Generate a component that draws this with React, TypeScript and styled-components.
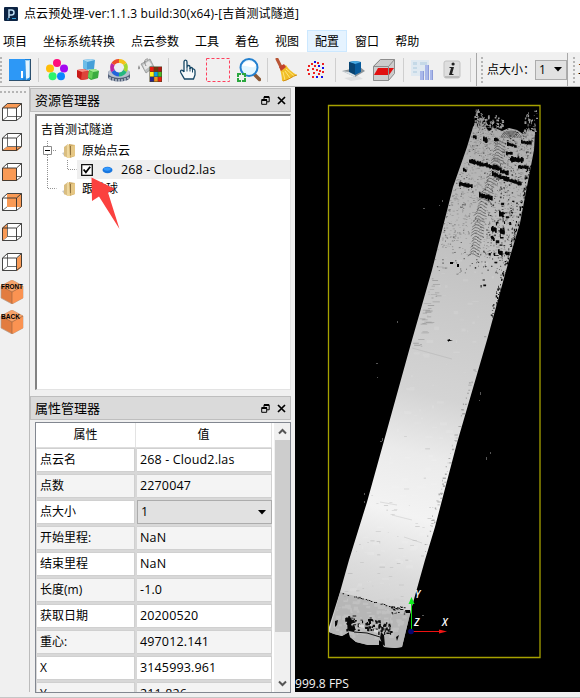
import React from 'react';
import styled, { createGlobalStyle } from 'styled-components';

const GlobalStyle = createGlobalStyle`
  * { box-sizing: border-box; }
  body { margin: 0; background: #f0f0f0; overflow: hidden; }
  svg { display: block; flex: none; }
`;

const Window = styled.div`
  width: 580px;
  height: 698px;
  display: flex;
  flex-direction: column;
  overflow: hidden;
  background: #f0f0f0;
  color: #000;
  font: 12px/16px 'Open Sans', 'Noto Sans CJK SC', sans-serif;
  white-space: nowrap;
`;

const TitleBar = styled.header`
  height: 28px;
  flex: none;
  display: flex;
  align-items: center;
  gap: 6px;
  padding: 0 0 0 4px;
  background: #fff;
`;

const TitleText = styled.span`
  letter-spacing: 0.12px;
`;

const MenuBar = styled.nav`
  height: 25px;
  flex: none;
  display: flex;
  padding: 2px 0 0;
  margin-left: -5px;
  background: #fff;
  border-bottom: 1px solid #f2f2f2;
`;

const MenuItem = styled.span<{ $active?: boolean }>`
  height: 22px;
  padding: ${p => (p.$active ? '3px 7px' : '4px 8px')};
  border: ${p => (p.$active ? '1px solid #cce8ff' : 'none')};
  background: ${p => (p.$active ? '#e5f3ff' : 'transparent')};
`;

const Toolbar = styled.div`
  height: 34px;
  flex: none;
  display: flex;
  align-items: center;
  border-bottom: 1px solid #b4b4b4;
  overflow: hidden;
`;

const Grip = styled.span<{ $horizontal?: boolean; $length: number }>`
  flex: none;
  width: ${p => (p.$horizontal ? p.$length : 3)}px;
  height: ${p => (p.$horizontal ? 3 : p.$length)}px;
  background-image: radial-gradient(circle at 1px 1px, #b5b5b5 1px, transparent 1.3px);
  background-size: ${p => (p.$horizontal ? '4px 3px' : '3px 4px')};
`;

const ToolGroup = styled.div<{ $gap: number }>`
  display: flex;
  gap: ${p => p.$gap}px;
`;

const Separator = styled.span<{ $width: number }>`
  flex: none;
  width: ${p => p.$width}px;
  height: 24px;
  background: linear-gradient(#cfcfcf, #cfcfcf) 50% 50% / 1px 100% no-repeat;
`;

const BarEdge = styled.span`
  flex: none;
  width: 1px;
  height: 34px;
  background: #a8a8a8;
`;

const ToolLabel = styled.span`
  width: 48px;
  margin-left: 3px;
`;

const Combo = styled.div<{ $wide?: boolean }>`
  flex: ${p => (p.$wide ? '1' : 'none')};
  width: ${p => (p.$wide ? 'auto' : '32px')};
  height: ${p => (p.$wide ? '24px' : '20px')};
  display: flex;
  align-items: center;
  justify-content: space-between;
  padding: 0 ${p => (p.$wide ? '5px 0 3px' : '4px 0 3px')};
  border: 1px solid #acacac;
  background: #e1e1e1;
`;

const Body = styled.main`
  flex: 1;
  min-height: 0;
  display: flex;
`;

const SideBar = styled.aside`
  width: 30px;
  flex: none;
  display: flex;
  flex-direction: column;
  align-items: flex-start;
  padding: 4px 0 0;
  border-right: 1px solid #bcbcbc;
`;

const ViewButtons = styled.div`
  display: flex;
  flex-direction: column;
  gap: 6px;
  margin-top: 6px;
`;

const DockColumn = styled.section`
  width: 265px;
  flex: none;
  display: flex;
  flex-direction: column;
  padding: 1px 4px 0 0;
`;

const DockTitle = styled.div`
  height: 24px;
  flex: none;
  display: flex;
  align-items: center;
  gap: 7px;
  padding: 0 4px;
  border: 1px solid #bebebe;
  background: #dadada;
  font-size: 13px;
`;

const DockName = styled.span`
  flex: 1;
`;

const Tree = styled.div`
  height: 276px;
  flex: none;
  margin: 2px 0 6px 5px;
  border: 1px solid #e3e3e3;
  border-top: 2px solid #828282;
  border-left: 2px solid #828282;
  background: #fff;
  padding-top: 3px;
`;

const TreeRow = styled.div<{ $indent: number; $size: number }>`
  height: ${p => p.$size}px;
  display: flex;
  align-items: center;
  padding-left: ${p => p.$indent}px;
`;

const TreeItem = styled.div`
  flex: 1;
  height: 19px;
  display: flex;
  align-items: center;
  padding-left: 4px;
  background: #efefef;
`;

const TreeIcon = styled.span<{ $gap: number }>`
  margin-right: ${p => p.$gap}px;
`;

const WideText = styled.span`
  letter-spacing: 0.14px;
  font-size: 12.5px;
`;

const Table = styled.div`
  height: 271px;
  flex: none;
  display: flex;
  margin: 2px 0 0 5px;
  border: 1px solid #828790;
  background: #fff;
  overflow: hidden;
`;

const Grid = styled.div`
  width: 236px;
  flex: none;
`;

const HeaderRow = styled.div`
  height: 25px;
  display: grid;
  grid-template-columns: 100px 136px;
  text-align: center;
  line-height: 24px;
  border-bottom: 1px solid #dedede;
`;

const HeaderCell = styled.span`
  border-right: 1px solid #e3e3e3;
`;

const Row = styled.div`
  height: 26px;
  display: grid;
  grid-template-columns: 98px 135px;
  column-gap: 2px;
  padding: 0 0 2px 1px;
  background: #d8d8d8;
`;

const Cell = styled.span<{ $alt: boolean }>`
  display: flex;
  align-items: center;
  padding: 0 3px;
  border: 1px solid #d0d0d0;
  border-left-width: 0;
  background: ${p => (p.$alt ? '#f4f4f4' : '#fff')};
`;

const ScrollBar = styled.div`
  flex: 1;
  margin-left: 2px;
  display: flex;
  flex-direction: column;
  align-items: center;
  background: #f0f0f0;
`;

const Thumb = styled.div`
  width: 15px;
  height: 192px;
  background: #cdcdcd;
  margin-bottom: auto;
`;

const Viewport = styled.div`
  width: 285px;
  height: 605px;
  background: #000;
`;

const StatusBar = styled.footer`
  height: 6px;
  flex: none;
  border-bottom: 1px solid #c6c6c6;
`;

/* ---------- toolbar icons ---------- */

const Icon = ({ children }: { children: React.ReactNode }) => (
  <svg width="24" height="24" viewBox="0 0 24 24">{children}</svg>
);

const BookIcon = () => (
  <Icon>
    <path d="M2 1h22v21H2z" fill="#1b84dc" />
    <path d="M18 2h5v17l-4 3z" fill="#9fd0f2" />
    <path d="M19 3h3v17h-3z" fill="#e6f5ff" />
    <path d="M2 1h16v17l-3 4H2z" fill="#2d98f6" />
    <path d="M14 13h2v7h-2z" fill="#fff" />
    <path d="M2 22.5h21M23.5 1v21" stroke="#2b506f" fill="none" />
  </Icon>
);

const FlowerIcon = () => (
  <Icon>
    <circle cx="12" cy="5" r="4" fill="#ff0d7c" />
    <circle cx="5" cy="10.5" r="4" fill="#ffbd08" />
    <circle cx="19" cy="10.5" r="4" fill="#a307f0" />
    <circle cx="7.6" cy="18.3" r="4" fill="#2bf56d" />
    <circle cx="16" cy="18.3" r="4" fill="#0b86ff" />
  </Icon>
);

const CubesIcon = () => (
  <Icon>
    <path d="M7 2l8-1 4 1-1 9-9 1-2-2z" fill="#459fd8" />
    <path d="M7 2l8-1 4 1-8 2z" fill="#a7d9f3" />
    <path d="M7 2l4 2v8l-4-2z" fill="#6bbce8" />
    <path d="M1 12l7-1 5 2-1 8-7 1-4-3z" fill="#c91a18" />
    <path d="M1 12l7-1 5 2-7 1z" fill="#f78f84" />
    <path d="M6 14l7-1-1 8-7 1z" fill="#de4439" />
    <path d="M13 12l6-1 4 2-1 7-7 2-3-2z" fill="#3aab3f" />
    <path d="M13 12l6-1 4 2-6 1z" fill="#a2ec91" />
    <path d="M13 13l4 1-1 7-4-2z" fill="#65ce58" />
  </Icon>
);

const ColorWheelIcon = () => (
  <Icon>
    <path d="M1 15c0-5 22-5 22 0v4c0 6-22 6-22 0z" fill="#515f78" />
    <ellipse cx="12" cy="15" rx="11" ry="5" fill="#b7bfcd" />
    <path d="M3 19v3m3-2v3m3-2v3m3-3v3m3-3v3m3-4v3m3-4v2" stroke="#d0d7e0" strokeWidth="1.2" />
    <g fill="none" strokeWidth="3.8">
      <path d="M12 3a7 7 0 0 1 6 3" stroke="#f5c21a" />
      <path d="M18 6a7 7 0 0 1 0 7" stroke="#a0d832" />
      <path d="M18 13a7 7 0 0 1-6 3.5" stroke="#24b77e" />
      <path d="M12 16.5a7 7 0 0 1-6-3.5" stroke="#2264db" />
      <path d="M6 13a7 7 0 0 1 0-7" stroke="#bc26a4" />
      <path d="M6 6a7 7 0 0 1 6-3" stroke="#ed4a27" />
    </g>
    <circle cx="12" cy="9.8" r="4.5" fill="#eceef4" />
  </Icon>
);

const BucketIcon = () => (
  <Icon>
    <path d="M3 6l9-5 4 8-8 6z" fill="#bcc0c0" stroke="#8a8a8a" strokeWidth=".7" />
    <path d="M5 7l6-4 3 4-7 5z" fill="#e8e8e8" />
    <path d="M10 1c-4 0-4 3-2 7" fill="none" stroke="#858585" />
    <path d="M1 7c-2 4 0 6 1 3z" fill="#888" />
    <path d="M11.5 8.5H24V24H11.5z" fill="#4b4523" />
    <path d="M12 9h3.700v4.500H12zM20.200 19h3.300v4.500h-3.300z" fill="#e91b13" />
    <path d="M16.200 9h3.500v4.500h-3.500z" fill="#75350d" />
    <path d="M20.200 9h3.300v4.500h-3.300z" fill="#b41510" />
    <path d="M12 14h3.700v4.500H12z" fill="#fff31c" />
    <path d="M16.200 14h3.500v4.500h-3.500z" fill="#0aa0e4" />
    <path d="M20.200 14h3.300v4.500h-3.300z" fill="#4bbd24" />
    <path d="M12 19h3.700v4.500H12z" fill="#29248d" />
    <path d="M16.200 19h3.500v4.500h-3.500z" fill="#f3931d" />
  </Icon>
);

const HandIcon = () => (
  <Icon>
    <path d="M9 14V4c0-2.5 3-2.5 3 0v6-1c0-2 3-2 3 0v2c0-2 2.5-2 2.5 0v1c0-2 2.5-1 2.5 1v4l-1.5 4H9.5L6 15c-1.5-3 1-4 3-1" fill="#f8fbfc" stroke="#164765" strokeWidth="1.3" />
    <path d="M12 10v3.500m3-3.500v3.500m2.500-2v3" stroke="#164765" />
  </Icon>
);

const SelectIcon = () => (
  <Icon>
    <path d="M.5.5h23v23H.5z" fill="none" stroke="#ff405d" strokeDasharray="3 2" />
  </Icon>
);

const MagnifierIcon = () => (
  <Icon>
    <path d="M18 17l4.500 4.500" stroke="#8a5835" strokeWidth="3.500" strokeLinecap="round" />
    <circle cx="12" cy="9.500" r="8.500" fill="#e2f6ff" stroke="#2380cf" strokeWidth="2" />
    <path d="M5 8c2-5 10-7 14-1-2 5-9 0-14 1z" fill="#fff" />
    <path d="M0 15h4v2H2v2H0zM5 15h4v4H7v-2H5zM0 20h2v2h2v2H0zM7 20h2v4H5v-2h2z" fill="#2aa73e" />
  </Icon>
);

const BroomIcon = () => (
  <Icon>
    <path d="M3 1l4 8" stroke="#b95535" strokeWidth="3" strokeLinecap="round" />
    <path d="M6 11l6-4c3 5 6 7 11 10-4 1-9 6-15 6 0-4-1-8-2-12z" fill="#f1bf28" />
    <path d="M5 9l5-3 2 3-5 4z" fill="#c4422c" />
    <path d="M9 14l2 8m0-9l5 7m-4-9l8 7" stroke="#ffe57a" fill="none" />
    <path d="M9 23c6-1 9-5 14-6" stroke="#d18d12" fill="none" />
  </Icon>
);

const DotsIcon = () => {
  const dots = [[7, 5], [10, 3, 1], [13, 4], [18, 5], [4, 7], [10, 7], [14, 7, 1], [18, 9, 1], [3, 11], [8, 10], [12, 11], [15, 12], [4, 15], [9, 14], [14, 15], [17, 18, 1], [8, 18], [12, 18, 1], [18, 13]];
  return <Icon>{dots.map(([x, y, b], i) => <rect key={i} x={x} y={y} width="2" height="2" fill={b ? '#1010e8' : '#ee2020'} />)}</Icon>;
};

const SolidBoxIcon = () => (
  <Icon>
    <path d="M2 20l14-2 5 3-12 2z" fill="#dedfe0" />
    <path d="M0 13l18-4 5 4-10 6z" fill="#8b9297" />
    <path d="M7 4l6-1 6 1v10l-6 3-6-2z" fill="#075a9b" />
    <path d="M7 4l6-1 6 1-6 2z" fill="#4aaae2" />
    <path d="M7 4l6 2v11l-6-2z" fill="#084371" />
    <path d="M0 13l7 1 6 3v2z" fill="#d9e1e6" />
  </Icon>
);

const SliceIcon = () => (
  <Icon>
    <path d="M1 8l7-7h15v14l-7 8H1z" fill="#ccc" />
    <path d="M6 10h16l-5 7H2z" fill="#e10f0f" />
    <path d="M1.5 8.5h15v14h-15zM1.5 8.5l7-7h14v14l-6 7M16.5 8.5l6-7" fill="none" stroke="#8d8d8d" />
  </Icon>
);

const ChartIcon = () => (
  <Icon>
    <path d="M1 2h18v16H1z" fill="#dfe9f1" />
    <path d="M3 4h4v3H3zm0 5h4v2H3zm0 4h4v2H3zM10 4h7v3h-7z" fill="#c5d9e7" />
    <path d="M10 13h4v9h-4zM15 7h4v15h-4zM20 12h3v10h-3z" fill="#a9b8ea" />
    <path d="M13 13h1v9h-1zM18 7h1v15h-1zM22 12h1v10h-1z" fill="#8d9cd8" />
  </Icon>
);

const InfoIcon = () => (
  <Icon>
    <rect x="4" y="3" width="16" height="17" rx="2" fill="#dedede" stroke="#c2c2c2" />
    <path d="M5 18h14v2H5z" fill="#bbb" />
    <circle cx="13.1" cy="6" r="1.6" fill="#222" />
    <path d="M10 9h4l-2 7h2l-1 1h-4l2-7H9z" fill="#222" />
  </Icon>
);

const Arrow = () => (
  <svg width="8" height="5" viewBox="0 0 8 5"><path d="M0 0h8L4 4.5z" /></svg>
);

const AppIcon = () => (
  <svg width="14" height="14" viewBox="0 0 14 14">
    <rect width="14" height="14" rx="1" fill="#0c2343" />
    <path d="M5 11V3h2.5a2.3 2.3 0 0 1 0 5H5" fill="none" stroke="#bddcf1" strokeWidth="1.5" />
    <path d="M8 11.5h4M3 12h2" stroke="#38a1d8" />
  </svg>
);

/* ---------- view buttons ---------- */

const faces: Record<string, string> = {
  top: 'M7 4H22L17 8H2z',
  bottom: 'M7 17H22L17 21H2z',
  front: 'M2 8H17V21H2z',
  back: 'M7 4H22V17H7z',
  left: 'M2 8L7 4V17L2 21z',
  right: 'M17 8L22 4V17L17 21z',
};

const CubeView = ({ face }: { face: string }) => (
  <Icon>
    <path d="M2 8L7 4H22V17L17 21H2z" fill="#fff" />
    <path d="M7.500 3.500v13h14M2.500 20.500l5-4" fill="none" stroke="#4a4a4a" strokeWidth=".8" />
    <path d={faces[face]} fill="#f99a55" />
    <path d="M2.500 8h14v12.500h-14zM2.500 8l5-4.500h14v13l-5 4M16.500 8l5-4.500" fill="none" stroke="#30302f" strokeWidth=".9" />
  </Icon>
);

const FaceText = styled.text`
  font: 700 7px 'Liberation Sans', sans-serif;
`;

const NamedCube = ({ name }: { name: string }) => (
  <Icon>
    <path d="M12 0l11 6v12l-11 6L1 18V6z" fill="#e27c40" stroke="#b3a092" strokeWidth=".7" />
    <path d="M12 0l11 6-11 6L1 6z" fill="#f6a26a" />
    <path d="M12 12v12l11-6V6z" fill="#fb9352" />
    <path d="M1 6l11 6v12M12 12l11-6" fill="none" stroke="#92633f" strokeWidth=".6" />
    <FaceText x="1" y="8.5" textLength={name === 'FRONT' ? 22 : 19} lengthAdjust="spacingAndGlyphs">{name}</FaceText>
  </Icon>
);

/* ---------- dock drawings ---------- */

const FloatIcon = () => (
  <svg width="9" height="9" viewBox="0 0 9 9">
    <path d="M3 3V.8h5.2v5H6" fill="none" stroke="#000" />
    <path d="M3 1h5M1 4h5" stroke="#000" strokeWidth="2" />
    <path d="M.7 3.500h5v4.800h-5z" fill="none" stroke="#000" />
  </svg>
);

const CloseIcon = () => (
  <svg width="9" height="9" viewBox="0 0 9 9"><path d="M1 1l7 7M8 1L1 8" stroke="#000" strokeWidth="1.7" /></svg>
);

const FolderIcon = () => (
  <svg width="14" height="16" viewBox="0 0 14 16">
    <path d="M0 10l3-1v5z" fill="#c9c9c9" />
    <path d="M2 4l4-3v14l-4-2z" fill="#d9bd80" />
    <path d="M5 2l3-1v14H5z" fill="#eed79d" />
    <path d="M7 1l6 1v11l-5 2z" fill="#cba760" />
    <path d="M9 3l4-1v11l-4 1z" fill="#e6c784" />
    <path d="M8.500 3v9" stroke="#91733e" />
  </svg>
);

const Branch = ({ kind, width = 20 }: { kind: 'expand' | 'child' | 'last'; width?: number }) => (
  <svg width={width} height="19" viewBox={`0 0 ${width} 19`}>
    <g stroke="#929292" strokeDasharray="1 1" fill="none">
      {kind === 'expand' && <path d="M5.5 0v5M5.5 14v5M11 9.5h4" />}
      {kind === 'child' && <path d="M5.5 0v19" />}
      {kind === 'last' && <path d="M5.5 0v9.5h9" />}
    </g>
    {kind === 'expand' && <path d="M1.5 5.5h8v8h-8z" fill="#fff" stroke="#8a8a8a" />}
    {kind === 'expand' && <path d="M3 9.5h5" stroke="#000" />}
  </svg>
);

const CheckBox = () => (
  <svg width="12" height="12" viewBox="0 0 12 12">
    <path d="M.7.7h10.6v10.6H.7z" fill="#fff" stroke="#111" strokeWidth="1.3" />
    <path d="M2.6 5.5l2.3 2.800 4.300-5.500" fill="none" stroke="#000" strokeWidth="1.8" />
  </svg>
);

const CloudDot = () => (
  <svg width="11" height="8" viewBox="0 0 11 8">
    <ellipse cx="5.5" cy="4" rx="5" ry="3.2" fill="#1976df" />
    <ellipse cx="5.3" cy="3" rx="3.5" ry="1.7" fill="#359afd" />
  </svg>
);

const Chevron = ({ down }: { down?: boolean }) => (
  <svg width="15" height="17" viewBox="0 0 15 17">
    <path d={down ? 'M4 6.500l3.500 3.500L11 6.500' : 'M4 10.500L7.500 7 11 10.500'} fill="none" stroke="#555" strokeWidth="2" />
  </svg>
);

const PointerOverlay = styled.svg`
  position: absolute;
  left: 89px;
  top: 176px;
`;

/* ---------- point cloud ---------- */

const makeRandom = (start: number) => {
  let s = start;
  return () => {
    s = (s * 1664525 + 1013904223) % 4294967296;
    return s / 4294967296;
  };
};

const rnd = makeRandom(77);

type Point = [number, number];
const leftSide: Point[] = [[475, 105], [473, 127], [467, 147], [453, 187], [432, 270], [410, 347], [387, 430], [367, 502], [349, 560], [340, 592], [329, 627]];
const rightSide: Point[] = [[538, 105], [534, 150], [520, 223], [509, 260], [487, 340], [457, 443], [435, 527], [425, 560], [411, 610], [402, 647]];
const topRim: Point[] = [[475, 124], [479, 129], [484, 126], [489, 131], [495, 128], [502, 131], [509, 128], [517, 130], [523, 134], [529, 130], [535, 132]];
const bottomRim: Point[] = [[395, 648], [384, 647], [382, 642], [379, 640], [379, 645], [368, 645], [356, 642], [350, 637], [349, 632], [342, 636], [334, 634], [329, 632]];

const outline = 'M' + [...topRim, ...rightSide.slice(1), ...bottomRim, ...leftSide.slice(1).reverse()].map(p => p.join(' ')).join('L') + 'z';

const edgeAt = (side: Point[], y: number) => {
  let i = 1;
  while (i < side.length - 1 && side[i][1] < y) i++;
  const [x0, y0] = side[i - 1];
  const [x1, y1] = side[i];
  return x0 + ((x1 - x0) * (y - y0)) / (y1 - y0);
};

const dot = (x: number, y: number, w: number, h: number) => `M${x.toFixed(1)} ${y.toFixed(1)}h${w.toFixed(1)}v${h.toFixed(1)}h-${w.toFixed(1)}z`;

const scatter = (n: number, y0: number, y1: number, power: number, maxW: number, maxH: number, from = 0, to = 1) => {
  let d = '';
  for (let i = 0; i < n; i++) {
    const y = y0 + Math.pow(rnd(), power) * (y1 - y0);
    const t = from + rnd() * (to - from);
    const l = edgeAt(leftSide, y);
    const x = l + t * (edgeAt(rightSide, y) - l);
    d += dot(x, y, 0.5 + rnd() * maxW, 0.5 + rnd() * maxH);
  }
  return d;
};

/* A ragged elongated hole made of small overlapping pieces. */
const hole = (x0: number, y0: number, x1: number, y1: number, thick: number) => {
  let d = '';
  const n = Math.ceil(Math.hypot(x1 - x0, y1 - y0) / 1.2);
  for (let i = 0; i <= n; i++) {
    const t = i / n;
    const h = thick * (0.6 + rnd() * 0.7);
    d += dot(x0 + (x1 - x0) * t, y0 + (y1 - y0) * t - h / 2 + (rnd() - 0.5), 1.7, h);
  }
  return d;
};

const topSpecks = scatter(420, 124, 275, 1.6, 1, 0.8);
const topHaze = scatter(1000, 124, 255, 1.2, 1.8, 0.7);
const rightSpecks = scatter(170, 130, 270, 1, 1.4, 1.2, 0.55, 1);
const rightHoles = scatter(30, 195, 285, 1, 3.2, 2.6, 0.68, 0.9);
const edgeHoles = scatter(120, 165, 320, 1.1, 1.2, 2, 0.94, 1.0);
const crown = scatter(70, 104, 128, 0.45, 1.5, 2.2, 0, 0.12) + scatter(90, 114, 128, 0.6, 1.8, 2, 0.08, 0.45) + scatter(50, 110, 134, 0.6, 1.5, 2.6, 0.8, 0.99);
const leftStreaks = scatter(42, 265, 350, 1, 7, 0.4, 0.01, 0.15);
const rightStreaks = scatter(60, 330, 560, 0.6, 3, 1.2, 0.92, 0.97);
const midStreaks = scatter(50, 430, 600, 0.7, 5, 0.2, 0.03, 0.9);
const paleMarks = scatter(110, 240, 590, 1, 7, 3, 0.04, 0.88);

const holes =
  hole(469, 161, 500, 169, 4) + hole(500, 171, 507, 173, 4) + hole(492, 174, 520, 184, 4) + hole(459, 184, 471, 186, 4) +
  hole(479, 195, 491, 198, 5) + hole(510, 159, 522, 160, 5) + hole(518, 167, 527, 167, 3) + hole(507, 144, 515, 146, 3) +
  hole(483, 139, 486, 141, 5) + hole(473, 137, 475, 137, 3) + hole(506, 153, 511, 153, 3) + hole(494, 139, 497, 140, 3) +
  hole(521, 142, 530, 143, 3) + hole(463, 170, 465, 171, 3) + hole(499, 214, 502, 215, 5) + hole(491, 229, 495, 230, 5) +
  hole(500, 231, 503, 232, 4) + hole(491, 237, 493, 239, 3) + hole(498, 252, 501, 253, 4) + hole(505, 253, 508, 254, 3);

const ripples = (() => {
  let d = '';
  for (let i = 0; i < 40; i++) {
    const y = 141 + i * 2.9;
    const x = 500 - i * 0.72 + Math.sin(i / 5) * 2;
    const w = 4 + rnd() * 2.5;
    d += `M${x - w} ${y + 2}q${w * 0.6}-4 ${w}-2t${w} 3`;
  }
  for (let i = 0; i < 6; i++) {
    const r = 2 + i * 1.6;
    d += `M${511 - r} 138a${r} ${r * 0.7} 0 0 1 ${r * 2} 0`;
  }
  return d;
})();

const bottomHoles = (() => {
  let d = '';
  for (let i = 0; i < 30; i++) d += dot(345 + rnd() * 8, 615 + rnd() * 14, 0.8 + rnd() * 3, 0.8 + rnd() * 3);
  for (let i = 0; i < 40; i++) d += dot(353 + rnd() * 26, 617 + rnd() * 13, 0.8 + rnd() * 2.2, 0.8 + rnd() * 2);
  for (let i = 0; i < 28; i++) d += dot(378 + rnd() * 13, 621 + rnd() * 12, 0.8 + rnd() * 2.5, 0.8 + rnd() * 2.5);
  for (let i = 0; i < 42; i++) if (rnd() > 0.3) d += dot(341 + i * 1.65, 592 + i * 0.45 + rnd() * 1.2, 1 + rnd() * 0.6, 1);
  for (let i = 0; i < 24; i++) d += dot(390 + rnd() * 18, 606 + rnd() * 8, 0.8 + rnd() * 1.5, 0.9);
  return d;
})();

const bottomShade = (() => {
  let d = '';
  for (let i = 0; i < 130; i++) {
    const y = 598 + rnd() * 38;
    const l = edgeAt(leftSide, y);
    d += dot(l + 2 + rnd() * 68, y, 1 + rnd() * 5, 1 + rnd() * 3);
  }
  return d;
})();

const AxisText = styled.text`
  font: italic 600 10px 'Open Sans', sans-serif;
  fill: #fff;
`;

const FpsText = styled.text`
  font: 12px 'Open Sans', sans-serif;
  fill: #f3f3f3;
`;

const CloudScene = () => (
  <svg width="285" height="605" viewBox="295 87 285 605">
    <defs>
      <linearGradient id="intensity" gradientUnits="userSpaceOnUse" x1="500" y1="120" x2="370" y2="610">
        <stop offset="0" stopColor="#adadad" />
        <stop offset=".22" stopColor="#bebebe" />
        <stop offset=".38" stopColor="#c9c9c9" />
        <stop offset=".56" stopColor="#d4d4d4" />
        <stop offset=".68" stopColor="#ebebeb" />
        <stop offset=".8" stopColor="#f3f3f3" />
        <stop offset=".92" stopColor="#dcdcdc" />
        <stop offset="1" stopColor="#d2d2d2" />
      </linearGradient>
      <clipPath id="strip"><path d={outline} /></clipPath>
    </defs>
    <path d="M328.5 105.5H540V657.5H328.5z" fill="none" stroke="#a6a100" strokeWidth="1.3" />
    <path d={crown} fill="#999" />
    <path d={outline} fill="url(#intensity)" />
    <g clipPath="url(#strip)">
      <path d="M340 592l72 20-8 40h-80z" fill="#b2b2b2" opacity=".85" />
      <path d={bottomShade} fill="#cfcfcf" opacity=".4" />
      <path d={topHaze} fill="#777" opacity=".5" />
      <path d={paleMarks} fill="#fff" opacity=".1" />
      <path d={ripples} fill="none" stroke="#333" strokeWidth=".7" opacity=".75" />
      <path d={topSpecks} fill="#222" opacity=".6" />
      <path d={rightSpecks} fill="#111" opacity=".75" />
      <path d={rightHoles} fill="#080808" />
      <path d={edgeHoles} fill="#080808" />
      <path d={leftStreaks} fill="#898989" opacity=".6" />
      <path d={rightStreaks} fill="#8b8b8b" opacity=".65" />
      <path d={midStreaks} fill="#949494" opacity=".45" />
      <path d="M380 502l17 3M392 515l20 5M404 537l18 6M412 348l40 11" fill="none" stroke="#888" strokeWidth=".8" opacity=".25" />
    </g>
    <path d={holes} fill="#050505" />
    <path d="M450 262h3v2h-3zM457 264h2v3h-2zM447 340l3-1v1l3 1h-4v1z" />
    <path d={bottomHoles} fill="#0b0b0b" />
    <path d="M349 616l3 4-1 5 4 3-1 4-5-1-2-8zM381 632l3 3 1 11-3-2-2-6zM335 621l3-1-1 5-2 2zM396 637l3-2-2 6zM405 610h5v3h-4z" fill="#070707" />
    <path d="M354 632l13 1 13 4" stroke="#111" fill="none" />
    <path d="M359 624l5 1v3l-5-1zM374 629l4 1v3l-4-1z" fill="#d8d8d8" />
    <path d="M376 363h2v1h-2zM397 321h1v2h-1zM377 377h1v1h-1zM480 392h1v3h-1zM479 400h1v1h-1zM382 438h1v3h-1zM380 441h2v1h-2zM364 493h1v2h-1zM364 501h1v2h-1zM490 452h1v2h-1zM486 457h1v3h-1zM422 615h2v1h-2zM423 208h2v1h-2zM442 200h1v2h-1zM439 205h1v1h-1z" fill="#555" />
    <path d="M411.5 630v-28" stroke="#10df10" />
    <path d="M412 631.5h30" stroke="#e11" />
    <path d="M411.5 597l3 7h-6z" fill="#10ed20" />
    <path d="M439 629.5l8 2-8 2z" fill="#f01515" />
    <circle cx="411" cy="631.5" r="2.8" fill="#06066e" />
    <AxisText x="415" y="598">Y</AxisText>
    <AxisText x="414" y="626">Z</AxisText>
    <AxisText x="442" y="626">X</AxisText>
    <FpsText x="295" y="688" textLength="54" lengthAdjust="spacingAndGlyphs">999.8 FPS</FpsText>
  </svg>
);

const menus = ['项目', '坐标系统转换', '点云参数', '工具', '着色', '视图', '配置', '窗口', '帮助'];

const properties = [
  ['点云名', '268 - Cloud2.las'],
  ['点数', '2270047'],
  ['点大小', '1'],
  ['开始里程:', 'NaN'],
  ['结束里程', 'NaN'],
  ['长度(m)', '-1.0'],
  ['获取日期', '20200520'],
  ['重心:', '497012.141'],
  ['X', '3145993.961'],
  ['Y', '211.826'],
];

const DockHeader = ({ name }: { name: string }) => (
  <DockTitle><DockName>{name}</DockName><FloatIcon /><CloseIcon /></DockTitle>
);

const ToolStart = styled.div`
  width: 7px;
  flex: none;
  overflow: hidden;
`;

const ClippedLabel = styled.span`
  margin-left: 2px;
`;

const GripHolder = styled.div<{ $left: number }>`
  padding-left: ${p => p.$left}px;
`;

export default function App() {
  return (
    <Window>
      <GlobalStyle />
      <TitleBar><AppIcon /><TitleText>点云预处理-ver:1.1.3 build:30(x64)-[吉首测试隧道]</TitleText></TitleBar>
      <MenuBar>{menus.map(m => <MenuItem key={m} $active={m === '配置'}>{m}</MenuItem>)}</MenuBar>
      <Toolbar>
        <ToolStart><Grip as="div" $length={26} /></ToolStart>
        <ToolGroup $gap={7}><BookIcon /></ToolGroup>
        <Separator $width={14} />
        <ToolGroup $gap={7}><FlowerIcon /><CubesIcon /><ColorWheelIcon /><BucketIcon /></ToolGroup>
        <Separator $width={13} />
        <ToolGroup $gap={7}><HandIcon /><SelectIcon /><MagnifierIcon /></ToolGroup>
        <Separator $width={13} />
        <ToolGroup $gap={6}><BroomIcon /><DotsIcon /></ToolGroup>
        <Separator $width={14} />
        <ToolGroup $gap={6}><SolidBoxIcon /><SliceIcon /></ToolGroup>
        <Separator $width={14} />
        <ToolGroup $gap={6}><ChartIcon /><InfoIcon /></ToolGroup>
        <Separator $width={12} />
        <BarEdge />
        <GripHolder $left={4}><Grip as="div" $length={26} /></GripHolder>
        <ToolLabel>点大小：</ToolLabel>
        <Combo>1<Arrow /></Combo>
        <BarEdge />
        <GripHolder $left={5}><Grip as="div" $length={26} /></GripHolder>
        <ClippedLabel>工</ClippedLabel>
      </Toolbar>
      <Body>
        <SideBar>
          <Grip $horizontal $length={27} />
          <ViewButtons>
            {Object.keys(faces).map(f => <CubeView key={f} face={f} />)}
            <NamedCube name="FRONT" />
            <NamedCube name="BACK" />
          </ViewButtons>
        </SideBar>
        <DockColumn>
          <DockHeader name="资源管理器" />
          <Tree>
            <TreeRow $indent={4} $size={22}>吉首测试隧道</TreeRow>
            <TreeRow $indent={5} $size={19}><Branch kind="expand" /><TreeIcon $gap={6}><FolderIcon /></TreeIcon>原始点云</TreeRow>
            <TreeRow $indent={5} $size={19}>
              <Branch kind="child" /><Branch kind="last" width={15} />
              <TreeItem>
                <TreeIcon $gap={9}><CheckBox /></TreeIcon><TreeIcon $gap={8}><CloudDot /></TreeIcon><WideText>268 - Cloud2.las</WideText>
              </TreeItem>
            </TreeRow>
            <TreeRow $indent={5} $size={19}><Branch kind="last" /><TreeIcon $gap={6}><FolderIcon /></TreeIcon>跟踪球</TreeRow>
          </Tree>
          <DockHeader name="属性管理器" />
          <Table>
            <Grid>
              <HeaderRow><HeaderCell>属性</HeaderCell><HeaderCell>值</HeaderCell></HeaderRow>
              {properties.map(([name, value], i) => (
                <Row key={name}>
                  <Cell $alt={i % 2 === 1}>{name}</Cell>
                  {name === '点大小'
                    ? <Combo $wide><WideText>{value}</WideText><Arrow /></Combo>
                    : <Cell $alt={i % 2 === 1}><WideText>{value}</WideText></Cell>}
                </Row>
              ))}
            </Grid>
            <ScrollBar><Chevron /><Thumb /><Chevron down /></ScrollBar>
          </Table>
        </DockColumn>
        <Viewport><CloudScene /></Viewport>
      </Body>
      <StatusBar />
      <PointerOverlay width="32" height="54" viewBox="0 0 32 54">
        <path d="M2.5 1.5L26 13l-7 3.5L30.5 53 10 20.5 3 25z" fill="#fb413f" />
      </PointerOverlay>
    </Window>
  );
}
